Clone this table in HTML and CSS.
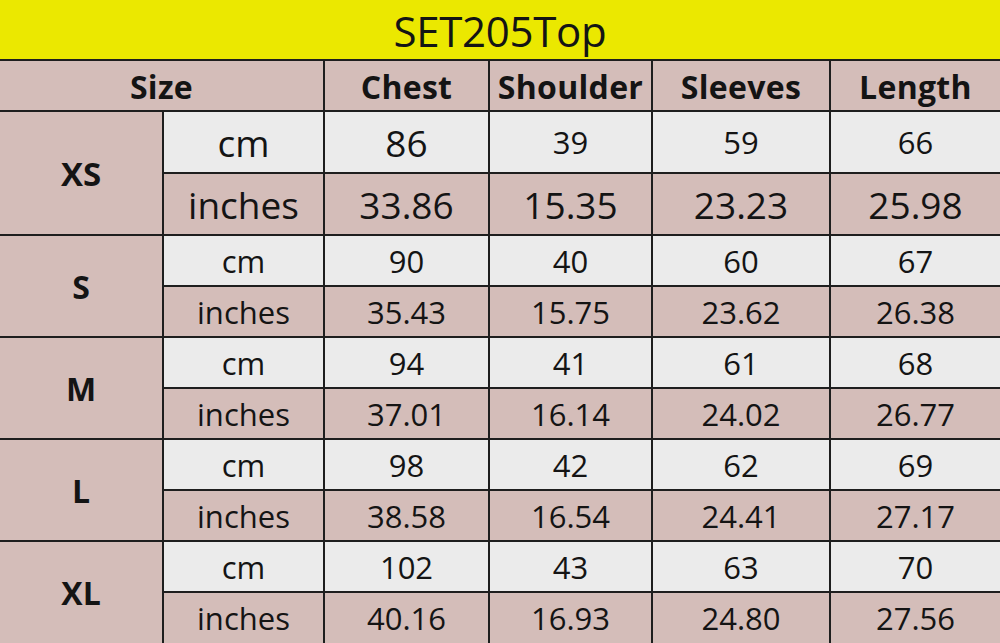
FILE: index.html
```html
<!DOCTYPE html>
<html>
<head>
<meta charset="utf-8">
<link rel="stylesheet" href="styles.css">
</head>
<body>
<div class="chart">
  <div class="title">SET205Top</div>

  <div class="cell head span2">Size</div>
  <div class="cell head">Chest</div>
  <div class="cell head">Shoulder</div>
  <div class="cell head">Sleeves</div>
  <div class="cell head">Length</div>

  <div class="cell size big-size r2">XS</div>
  <div class="cell cm big">cm</div>
  <div class="cell cm big">86</div>
  <div class="cell cm mid">39</div>
  <div class="cell cm mid">59</div>
  <div class="cell cm mid">66</div>
  <div class="cell in big">inches</div>
  <div class="cell in big">33.86</div>
  <div class="cell in big">15.35</div>
  <div class="cell in big">23.23</div>
  <div class="cell in big">25.98</div>

  <div class="cell size r2">S</div>
  <div class="cell cm">cm</div>
  <div class="cell cm">90</div>
  <div class="cell cm">40</div>
  <div class="cell cm">60</div>
  <div class="cell cm">67</div>
  <div class="cell in">inches</div>
  <div class="cell in">35.43</div>
  <div class="cell in">15.75</div>
  <div class="cell in">23.62</div>
  <div class="cell in">26.38</div>

  <div class="cell size r2">M</div>
  <div class="cell cm">cm</div>
  <div class="cell cm">94</div>
  <div class="cell cm">41</div>
  <div class="cell cm">61</div>
  <div class="cell cm">68</div>
  <div class="cell in">inches</div>
  <div class="cell in">37.01</div>
  <div class="cell in">16.14</div>
  <div class="cell in">24.02</div>
  <div class="cell in">26.77</div>

  <div class="cell size r2">L</div>
  <div class="cell cm">cm</div>
  <div class="cell cm">98</div>
  <div class="cell cm">42</div>
  <div class="cell cm">62</div>
  <div class="cell cm">69</div>
  <div class="cell in">inches</div>
  <div class="cell in">38.58</div>
  <div class="cell in">16.54</div>
  <div class="cell in">24.41</div>
  <div class="cell in">27.17</div>

  <div class="cell size r2">XL</div>
  <div class="cell cm">cm</div>
  <div class="cell cm">102</div>
  <div class="cell cm">43</div>
  <div class="cell cm">63</div>
  <div class="cell cm">70</div>
  <div class="cell in">inches</div>
  <div class="cell in">40.16</div>
  <div class="cell in">16.93</div>
  <div class="cell in">24.80</div>
  <div class="cell in">27.56</div>
</div>
</body>
</html>
```

FILE: styles.css
```css
html, body {
  margin: 0;
  padding: 0;
  background: #d4bdb9;
}

.chart {
  width: 1000px;
  height: 643px;
  overflow: hidden;
  display: grid;
  grid-template-columns: 162px 159px 163px 161px 176px 169px;
  grid-template-rows: 59px 49px 60px 60px 49px 49px 49px 49px 49px 49px 49px 50px;
  gap: 2px;
  background: #1e1e1e;
  font-family: "Open Sans", "Noto Sans", sans-serif;
  color: #141414;
}

.title {
  grid-column: 1 / -1;
  background: #ebe800;
  display: flex;
  align-items: center;
  justify-content: center;
  font-size: 42px;
  padding-top: 2px;
  letter-spacing: -0.3px;
}

.cell {
  display: flex;
  align-items: center;
  justify-content: center;
  font-size: 31px;
}

.head {
  background: #d4bdb9;
  font-weight: 700;
  font-size: 32px;
  letter-spacing: 0.3px;
  padding-top: 1px;
}

.span2 {
  grid-column: span 2;
}

.size {
  background: #d4bdb9;
  font-weight: 700;
  font-size: 32px;
}

.big-size {
  font-size: 33px;
}

.r2 {
  grid-row: span 2;
}

.cm {
  background: #ebebeb;
}

.in {
  background: #d4bdb9;
}

.big {
  font-size: 37px;
}

.mid {
  font-size: 31px;
}
```
